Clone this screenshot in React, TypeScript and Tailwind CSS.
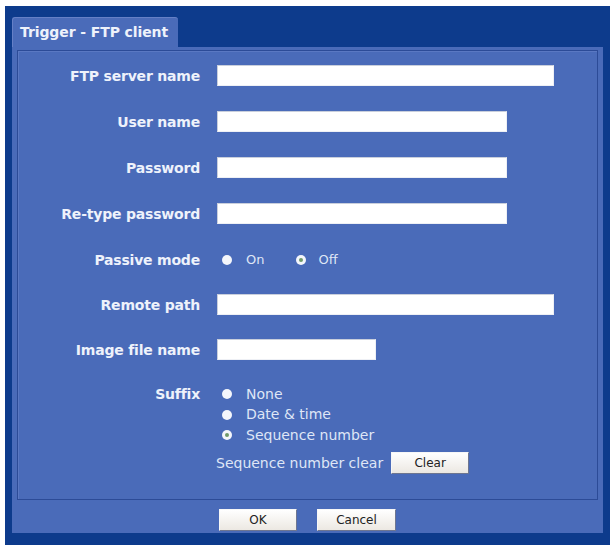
import type { ReactNode } from 'react'

const font = { fontFamily: '"DejaVu Sans", Verdana, sans-serif' }

function Label({ children }: { children: ReactNode }) {
  return (
    <div className="w-[183px] shrink-0 pr-[1px] text-right text-[14px] font-bold leading-none tracking-[-0.2px] text-[#eef2fb]">
      {children}
    </div>
  )
}

function Field({ w }: { w: string }) {
  return (
    <div
      className={`h-[21px] ${w} border border-t-[#c9cfdc] border-l-[#c9cfdc] border-r-[#eef0f5] border-b-[#eef0f5] bg-white`}
    />
  )
}

function Radio({ checked = false }: { checked?: boolean }) {
  return (
    <span className="flex h-[10px] w-[10px] items-center justify-center rounded-full bg-[#f4f6fb]">
      {checked && <span className="h-[4px] w-[4px] rounded-full bg-[#6f9a6a]" />}
    </span>
  )
}

function Btn({ children, w }: { children: ReactNode; w: string }) {
  return (
    <button
      className={`h-[22px] ${w} border border-t-[#f7f7f7] border-l-[#f7f7f7] border-r-[#6e7690] border-b-[#6e7690] bg-gradient-to-b from-[#ffffff] to-[#ece8e2] text-[12px] leading-none text-[#222]`}
    >
      {children}
    </button>
  )
}

export default function App() {
  return (
    <div className="h-[545px] w-[612px] bg-white pl-[5px] pt-[6px]" style={font}>
      <div className="flex h-[539px] w-[605px] flex-col bg-[#0d3b8c] pl-[7px] pr-[7px] pt-[11px]">
        <div className="flex h-[30px] w-[166px] items-center rounded-t-[3px] border-l border-t border-[#6580c6] bg-[#4a6bb9] pl-[7px] text-[14px] font-bold tracking-[-0.1px] text-[#eef2fb]">
          Trigger - FTP client
        </div>
        <div className="flex h-[486px] flex-col bg-[#4a6bb9] px-[5px] pt-[3px]">
          <div className="flex h-[450px] flex-col border border-[#2c4b97] pt-[14px] shadow-[inset_1px_1px_0_#5a78c2]">
            <div className="flex items-center gap-4">
              <Label>FTP server name</Label>
              <Field w="w-[337px]" />
            </div>
            <div className="mt-[25px] flex items-center gap-4">
              <Label>User name</Label>
              <Field w="w-[290px]" />
            </div>
            <div className="mt-[25px] flex items-center gap-4">
              <Label>Password</Label>
              <Field w="w-[290px]" />
            </div>
            <div className="mt-[25px] flex items-center gap-4">
              <Label>Re-type password</Label>
              <Field w="w-[290px]" />
            </div>
            <div className="mt-[25px] flex h-[21px] items-center gap-4">
              <Label>Passive mode</Label>
              <div className="flex items-center pl-[5px] text-[13px] text-[#dfe6f6]">
                <Radio />
                <span className="ml-[14px]">On</span>
                <span className="ml-[32px]">
                  <Radio checked />
                </span>
                <span className="ml-[12px]">Off</span>
              </div>
            </div>
            <div className="mt-[24px] flex items-center gap-4">
              <Label>Remote path</Label>
              <Field w="w-[337px]" />
            </div>
            <div className="mt-[24px] flex items-center gap-4">
              <Label>Image file name</Label>
              <Field w="w-[159px]" />
            </div>
            <div className="mt-[24px] flex items-start gap-4">
              <div className="flex h-[20px] items-center">
                <Label>Suffix</Label>
              </div>
              <div className="flex flex-col pl-[5px] text-[14px] text-[#dfe6f6]">
                <div className="flex h-[20px] items-center">
                  <Radio />
                  <span className="ml-[14px]">None</span>
                </div>
                <div className="flex h-[21px] items-center">
                  <Radio />
                  <span className="ml-[14px]">Date &amp; time</span>
                </div>
                <div className="flex h-[20px] items-center">
                  <Radio checked />
                  <span className="ml-[14px]">Sequence number</span>
                </div>
              </div>
            </div>
            <div className="mt-[7px] flex items-center pl-[198px] text-[14px] text-[#dfe6f6]">
              <span>Sequence number clear</span>
              <span className="ml-[8px]">
                <Btn w="w-[78px]">Clear</Btn>
              </span>
            </div>
          </div>
          <div className="mt-[9px] flex justify-center gap-[20px]">
            <Btn w="w-[78px]">OK</Btn>
            <Btn w="w-[79px]">Cancel</Btn>
          </div>
        </div>
      </div>
    </div>
  )
}
